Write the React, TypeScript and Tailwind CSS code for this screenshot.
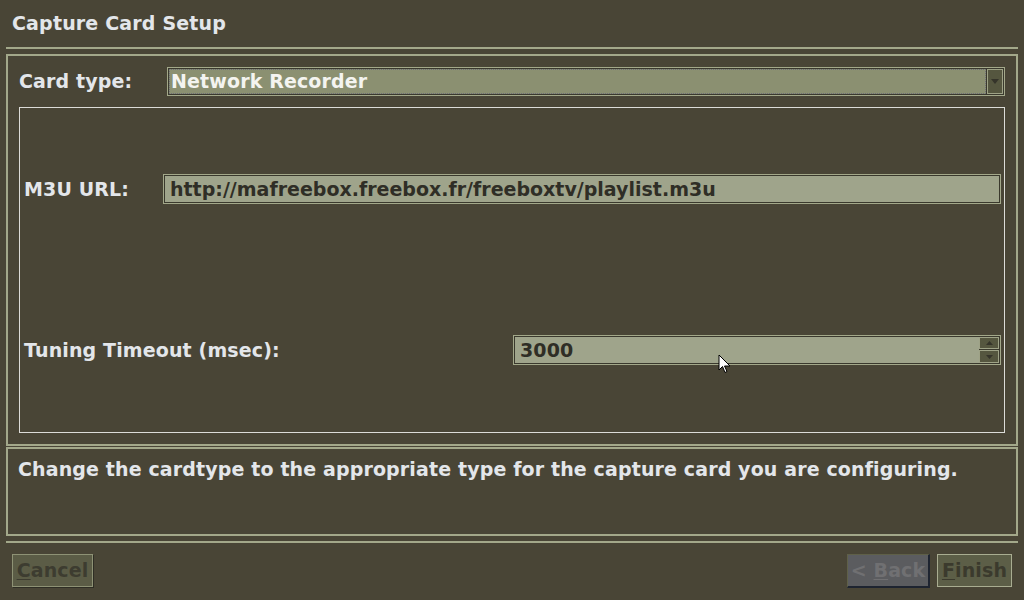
export default function App() {
  return (
    <div
      className="relative flex h-[600px] w-[1024px] flex-col overflow-hidden bg-[#494536] text-[19px] font-bold leading-[22px] tracking-[0.13px] text-[#e3e6ea]"
      style={{ fontFamily: '"DejaVu Sans", "Liberation Sans", sans-serif' }}
    >
      {/* title */}
      <div className="flex h-[47px] items-center pb-[2px] pl-3 tracking-[0.17px]">Capture Card Setup</div>
      <div className="mx-[6px] h-[2px] bg-[#a3a88a]" />

      {/* main frame */}
      <div className="mx-[6px] mt-[5px] flex h-[392px] flex-col gap-[11px] border-2 border-[#a3a88a] p-[11px]">
        <div className="flex h-[29px] items-center">
          <div className="w-[148px] pb-px">Card type:</div>
          <div className="flex h-full flex-1 border border-[#a3a88a] bg-[#3a392d] p-px">
            <div className="flex flex-1 items-center border border-dotted border-[#6f7078] bg-[#8b9071] pb-px pl-px text-[#f4f4f0]">
              Network Recorder
            </div>
            <div className="ml-px flex w-[16px] items-center justify-center border border-[#9ea286] bg-[#55563f]">
              <svg width="8" height="5" viewBox="0 0 8 5">
                <path d="M0 0h8L4 5z" fill="#35342a" />
              </svg>
            </div>
          </div>
        </div>

        <div className="flex flex-1 flex-col border border-[#dcdcd8] pl-1 pr-[3px]">
          <div className="flex flex-1 items-center pt-px">
            <div className="w-[139px]">M3U URL:</div>
            <div className="flex h-[30px] flex-1 items-center border border-[#a3a88a] bg-[#3a392d] p-px">
              <div className="flex h-full flex-1 items-center bg-[#9fa48b] pl-[5px] tracking-normal text-[#2f2e26]">
                http://mafreebox.freebox.fr/freeboxtv/playlist.m3u
              </div>
            </div>
          </div>
          <div className="mb-[2px] flex flex-1 items-center">
            <div className="flex-1">Tuning Timeout (msec):</div>
            <div className="flex h-[30px] w-[488px] border border-[#a3a88a] bg-[#3a392d] p-px">
              <div className="flex flex-1 items-center bg-[#9fa48b] pl-[5px] text-[#2f2e26]">3000</div>
              <div className="flex w-[20px] flex-col gap-px bg-[#3a392d]">
                <div className="flex flex-1 items-center justify-center border border-[#9ea286] bg-[#55563f]">
                  <svg width="7" height="4" viewBox="0 0 7 4">
                    <path d="M0 4h7L3.5 0z" fill="#35342a" />
                  </svg>
                </div>
                <div className="flex flex-1 items-center justify-center border border-[#9ea286] bg-[#55563f]">
                  <svg width="7" height="4" viewBox="0 0 7 4">
                    <path d="M0 0h7L3.5 4z" fill="#35342a" />
                  </svg>
                </div>
              </div>
            </div>
          </div>
        </div>
      </div>

      {/* description */}
      <div className="mx-[6px] mt-px h-[89px] border-2 border-[#a3a88a] pl-[10px] pt-[9px]">
        Change the cardtype to the appropriate type for the capture card you are configuring.
      </div>
      <div className="mx-[6px] mt-[5px] h-[2px] bg-[#a3a88a]" />

      {/* buttons */}
      <div className="mt-[11px] flex px-3">
        <button className="h-[33px] w-[81px] border border-[#8e9275] bg-[#5b5c46] pb-px text-[#3d3c30] shadow-[1px_1px_0_#2e2d24]">
          <span className="underline underline-offset-2">C</span>ancel
        </button>
        <div className="flex-1" />
        <button className="h-[34px] w-[83px] border border-[#5f6048] border-b-2 border-r-2 border-b-[#1e2430] border-r-[#1e2430] bg-[#5b5c5f] pb-px text-[#707072]">
          &lt; <span className="underline underline-offset-2">B</span>ack
        </button>
        <button className="ml-[7px] h-[33px] w-[75px] border border-[#a9ad91] bg-[#5c5e47] pb-px text-[#3b3a2d]">
          <span className="underline underline-offset-2">F</span>inish
        </button>
      </div>

      {/* mouse pointer */}
      <svg className="absolute left-[718px] top-[354px]" width="13" height="20" viewBox="0 0 13 20">
        <path d="M1 1v15l3.5-3.5 2.5 6 2-1-2.5-5.5H12z" fill="#fff" stroke="#000" strokeWidth="1" />
      </svg>
    </div>
  )
}
